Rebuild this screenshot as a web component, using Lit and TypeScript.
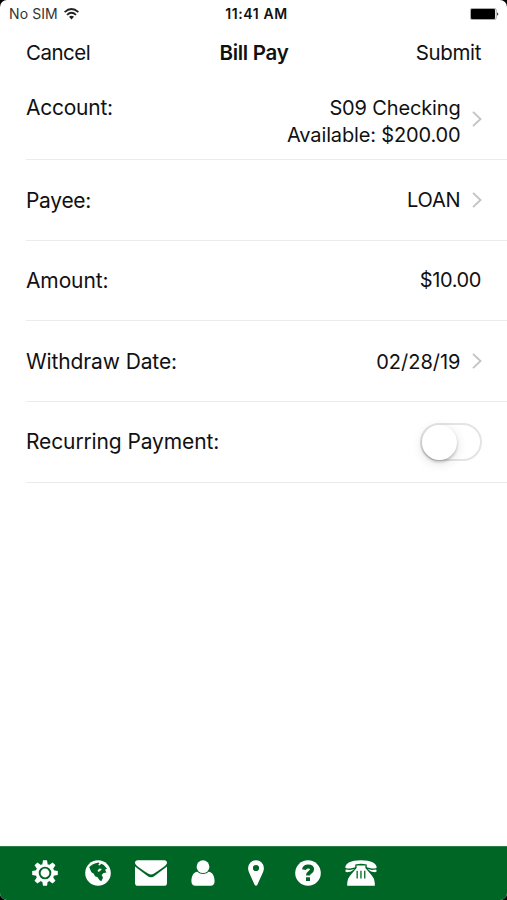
import { LitElement, html, css, svg, nothing } from "lit";
import { customElement } from "lit/decorators.js";

const chevron = html`<svg class="chevron" viewBox="0 0 10 18" width="10" height="18"><path d="M1 1.9 8.5 9 1 16.1" fill="none" stroke="#c4c4c7" stroke-width="1.9"/></svg>`;

const gearTeeth = [0, 45, 90, 135, 180, 225, 270, 315];

const tabs = [
  svg`<g transform="translate(16 14)" fill="#fff">
    ${gearTeeth.map((a) => svg`<path d="M-2.7-8.5-2-12.8H2L2.7-8.5Z" transform="rotate(${a})"/>`)}
    <circle r="7.8" fill="none" stroke="#fff" stroke-width="3"/><circle r="4.4"/></g>`,
  svg`<circle cx="16" cy="14" r="12.8" fill="#fff"/>
    <path fill="#006625" d="M7.2 8 10.5 5.6 13.5 4.3 16.6 3.6 17.5 4.8 16 5.8 17.6 6.6 19.2 4.8 21.8 6 25 9.8 23 10.8 24.5 13.4 21.6 14 19.6 16 21 18.6 19.6 22 17.8 21.4 15.6 18.2 13 17.2 11.8 14.8 9.4 13.2 8.2 10.5Z"/>
    <path fill="#fff" d="m15.6 11.4 1.8-2 2.4.6-1.4 1.8-2 1.2Z"/>`,
  svg`<path fill="#fff" d="M2.8 1.3H29.2Q32 1.3 32 3.9C31.5 6 29.5 7.4 19 14.4Q16 16.7 13 14.4C2.5 7.4.5 6 0 3.9Q0 1.3 2.8 1.3ZM0 7.4 12.2 16.7Q16 20 19.8 16.7L32 7.4V23.9Q32 26.7 29.2 26.7H2.8Q0 26.7 0 23.9Z"/>`,
  svg`<path fill="#fff" d="M10.4 12.7C13.6 15.6 18.4 15.6 21.6 12.7C25.7 13.2 27.4 17 27.6 22Q27.7 26.7 23.5 26.7H8.5Q4.3 26.7 4.4 22C4.6 17 6.3 13.2 10.4 12.7Z"/><circle cx="16" cy="7.7" r="6.4" fill="#fff"/>`,
  svg`<path fill="#fff" fill-rule="evenodd" d="M16 1.2A7.9 7.9 0 0 1 23.9 9.1C23.9 12 22.8 13.8 17.3 25.9Q16 27.5 14.7 25.9C9.2 13.8 8.1 12 8.1 9.1A7.9 7.9 0 0 1 16 1.2ZM16 5.9A3.1 3.1 0 1 0 16 12.1A3.1 3.1 0 1 0 16 5.9Z"/>`,
  svg`<circle cx="16" cy="14" r="12.8" fill="#fff"/><path d="M11.9 10.6C12.4 8.3 13.8 7.4 16.1 7.4C18.7 7.4 20.1 8.5 20.1 10.3C20.1 13.3 16 12.8 16 16.4" fill="none" stroke="#006625" stroke-width="4"/><path fill="#006625" d="M14 18.3h4v3.7h-4Z"/>`,
  svg`<path fill="#fff" d="M.3 8.8C.1 4.3 6 1.2 16 1.2S31.9 4.3 31.7 8.8Q31 10 27 9.4L22.4 8.6Q21.5 8.2 21.7 5.6Q16 4.1 10.3 5.6Q10.5 8.2 9.6 8.6L5 9.4Q1 10 .3 8.8Z"/>
    <path fill="#fff" fill-rule="evenodd" d="M11.6 6.6H20.4V9L27 16.8Q29.8 20 29.8 24v2.7H2.2V24Q2.2 20 5 16.8L11.6 9ZM11.5 11.8v7.6h1.3v-7.6ZM15.3 11.8v7.6h1.3v-7.6ZM19.1 11.8v7.6h1.3v-7.6ZM.7 10.5 5 11 9.5 10 6 12.6 2 13.2 .4 12.6ZM31.3 10.5 27 11 22.5 10 26 12.6 30 13.2 31.6 12.6Z"/>`,
];

interface Row {
  label: string;
  lines: string[];
  kind: string;
  more: boolean;
}

const rows: Row[] = [
  { label: "Account:", lines: ["S09 Checking", "Available: $200.00"], kind: "account", more: true },
  { label: "Payee:", lines: ["LOAN"], kind: "payee", more: true },
  { label: "Amount:", lines: ["$10.00"], kind: "amount", more: false },
  { label: "Withdraw Date:", lines: ["02/28/19"], kind: "date", more: true },
  { label: "Recurring Payment:", lines: [], kind: "recurring", more: false },
];

@customElement("app-root")
export class AppRoot extends LitElement {
  static styles = css`
    :host { display: block; height: 900px; background: #000; color: #111; font-family: Inter, "Liberation Sans", sans-serif; }
    * { box-sizing: border-box; }
    .screen { height: 900px; display: flex; flex-direction: column; background: #fff; border-radius: 7px; overflow: hidden; white-space: nowrap; }
    .status { height: 27px; display: grid; grid-template-columns: 1fr auto 1fr; align-items: center; padding: 0 8px 0 9px; font-size: 14px; }
    .carrier { display: flex; align-items: center; gap: 6px; color: #333; letter-spacing: .1px; }
    .time { font-weight: 600; font-size: 14px; letter-spacing: .6px; padding-left: 5px; }
    .battery { justify-self: end; }
    .nav { height: 51px; display: grid; grid-template-columns: 1fr auto 1fr; align-items: center; padding: 0 26px 1px; font-size: 20.5px; letter-spacing: -.5px; }
    .title { font-weight: 600; font-size: 20.5px; letter-spacing: -.3px; padding: 1px 0 0 1px; }
    .submit { text-align: right; letter-spacing: -.35px; }
    .row { height: 80.7px; margin-left: 26px; padding: 0 25px 0 0; display: flex; align-items: center; justify-content: space-between; border-bottom: 1.5px solid #ececec; font-size: 21px; letter-spacing: -.12px; }
    .account { height: 82px; align-items: flex-start; padding-top: 16px; letter-spacing: -.25px; }
    .account .label { line-height: 27px; }
    .payee { letter-spacing: -.3px; }
    .payee .label { padding-top: 1px; }
    .value { display: flex; align-items: center; gap: 11.5px; text-align: right; font-size: 20px; letter-spacing: -.15px; line-height: 27px; }
    .text { padding-top: 1px; }
    .amount .value { letter-spacing: -.4px; padding-right: 1px; }
    .amount .text { padding: 0; }
    .account .chevron { margin-top: -5px; }
    .chevron { display: block; }
    .date .text { padding-top: 2px; letter-spacing: 0; }
    .switch { width: 62px; height: 38px; border: 2px solid #e4e4e4; border-radius: 19px; background: #fff; }
    .knob { width: 35px; height: 35px; border-radius: 50%; background: #fff; box-shadow: 0 2px 3px rgba(0,0,0,.22), 0 3px 12px rgba(0,0,0,.12); }
    .spacer { flex: 1; }
    .tabs { height: 54px; background: #006625; border-top: 1px solid #287e46; display: flex; align-items: center; padding: 0 0 2px 29.4px; gap: 20.6px; }
    .tab { width: 32px; height: 28px; display: block; flex: none; }
  `;

  private renderRow(r: Row) {
    return html`<div class="row ${r.kind}">
      <span class="label">${r.label}</span>
      ${r.kind === "recurring"
        ? html`<div class="switch"><div class="knob"></div></div>`
        : html`<div class="value"><div class="text">${r.lines.map((l) => html`<div>${l}</div>`)}</div>${r.more ? chevron : nothing}</div>`}
    </div>`;
  }

  render() {
    return html`<div class="screen">
      <div class="status">
        <div class="carrier"><span>No SIM</span>
          <svg width="15" height="12" viewBox="0 0 15 12"><g fill="none" stroke="#222" stroke-width="1.8"><path d="M.6 4.2Q7.5-2.2 14.4 4.2"/><path d="M3 6.8Q7.5 2.7 12 6.8"/></g><path fill="#222" d="M5 8.8Q7.5 6.8 10 8.8L7.5 11.4Z"/></svg>
        </div>
        <div class="time">11:41 AM</div>
        <svg class="battery" width="29" height="12" viewBox="0 0 29 12"><rect x=".4" y=".4" width="25.8" height="11.2" rx="1.8" fill="#fff" stroke="#888" stroke-width=".8"/><rect x="1" y="1" width="24" height="10" rx="1" fill="#000"/><path d="M27.2 4.2Q29.4 6 27.2 7.8Z" fill="#222"/></svg>
      </div>
      <div class="nav"><span>Cancel</span><span class="title">Bill Pay</span><span class="submit">Submit</span></div>
      ${rows.map((r) => this.renderRow(r))}
      <div class="spacer"></div>
      <div class="tabs">${tabs.map((t) => html`<svg class="tab" viewBox="0 0 32 28">${t}</svg>`)}</div>
    </div>`;
  }
}
